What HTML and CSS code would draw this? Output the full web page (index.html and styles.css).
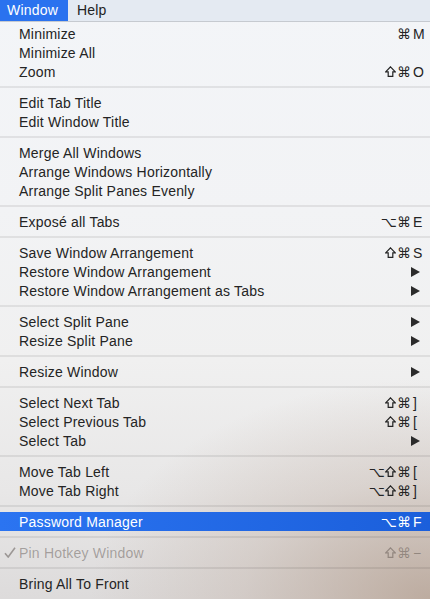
FILE: index.html
```html
<!DOCTYPE html>
<html>
<head>
<meta charset="utf-8">
<link rel="stylesheet" href="styles.css">
</head>
<body>
<div class="screen">
  <div class="menubar">
    <span class="mb-item active">Window</span>
    <span class="mb-item">Help</span>
  </div>
  <div class="menu">
    <div class="item"><span class="label">Minimize</span><span class="sc"><span class="mod">⌘</span><span class="key">M</span></span></div>
    <div class="item"><span class="label">Minimize All</span></div>
    <div class="item"><span class="label">Zoom</span><span class="sc"><span class="mod"><svg class="shift" width="11" height="11" viewBox="0 0 11 11"><path d="M5.5 0.8 L10.3 5.8 L7.8 5.8 L7.8 10.4 L3.2 10.4 L3.2 5.8 L0.7 5.8 Z"/></svg>⌘</span><span class="key">O</span></span></div>
    <div class="sep"></div>
    <div class="item"><span class="label">Edit Tab Title</span></div>
    <div class="item"><span class="label">Edit Window Title</span></div>
    <div class="sep"></div>
    <div class="item"><span class="label">Merge All Windows</span></div>
    <div class="item"><span class="label">Arrange Windows Horizontally</span></div>
    <div class="item"><span class="label">Arrange Split Panes Evenly</span></div>
    <div class="sep"></div>
    <div class="item"><span class="label">Exposé all Tabs</span><span class="sc"><span class="mod">⌥⌘</span><span class="key">E</span></span></div>
    <div class="sep"></div>
    <div class="item"><span class="label">Save Window Arrangement</span><span class="sc"><span class="mod"><svg class="shift" width="11" height="11" viewBox="0 0 11 11"><path d="M5.5 0.8 L10.3 5.8 L7.8 5.8 L7.8 10.4 L3.2 10.4 L3.2 5.8 L0.7 5.8 Z"/></svg>⌘</span><span class="key">S</span></span></div>
    <div class="item"><span class="label">Restore Window Arrangement</span><svg class="arrow" width="9" height="10" viewBox="0 0 9 10"><polygon points="0,0 9,5 0,10"/></svg></div>
    <div class="item"><span class="label">Restore Window Arrangement as Tabs</span><svg class="arrow" width="9" height="10" viewBox="0 0 9 10"><polygon points="0,0 9,5 0,10"/></svg></div>
    <div class="sep"></div>
    <div class="item"><span class="label">Select Split Pane</span><svg class="arrow" width="9" height="10" viewBox="0 0 9 10"><polygon points="0,0 9,5 0,10"/></svg></div>
    <div class="item"><span class="label">Resize Split Pane</span><svg class="arrow" width="9" height="10" viewBox="0 0 9 10"><polygon points="0,0 9,5 0,10"/></svg></div>
    <div class="sep"></div>
    <div class="item"><span class="label">Resize Window</span><svg class="arrow" width="9" height="10" viewBox="0 0 9 10"><polygon points="0,0 9,5 0,10"/></svg></div>
    <div class="sep"></div>
    <div class="item"><span class="label">Select Next Tab</span><span class="sc"><span class="mod"><svg class="shift" width="11" height="11" viewBox="0 0 11 11"><path d="M5.5 0.8 L10.3 5.8 L7.8 5.8 L7.8 10.4 L3.2 10.4 L3.2 5.8 L0.7 5.8 Z"/></svg>⌘</span><span class="key">]</span></span></div>
    <div class="item"><span class="label">Select Previous Tab</span><span class="sc"><span class="mod"><svg class="shift" width="11" height="11" viewBox="0 0 11 11"><path d="M5.5 0.8 L10.3 5.8 L7.8 5.8 L7.8 10.4 L3.2 10.4 L3.2 5.8 L0.7 5.8 Z"/></svg>⌘</span><span class="key">[</span></span></div>
    <div class="item"><span class="label">Select Tab</span><svg class="arrow" width="9" height="10" viewBox="0 0 9 10"><polygon points="0,0 9,5 0,10"/></svg></div>
    <div class="sep"></div>
    <div class="item"><span class="label">Move Tab Left</span><span class="sc"><span class="mod">⌥<svg class="shift" width="11" height="11" viewBox="0 0 11 11"><path d="M5.5 0.8 L10.3 5.8 L7.8 5.8 L7.8 10.4 L3.2 10.4 L3.2 5.8 L0.7 5.8 Z"/></svg>⌘</span><span class="key">[</span></span></div>
    <div class="item"><span class="label">Move Tab Right</span><span class="sc"><span class="mod">⌥<svg class="shift" width="11" height="11" viewBox="0 0 11 11"><path d="M5.5 0.8 L10.3 5.8 L7.8 5.8 L7.8 10.4 L3.2 10.4 L3.2 5.8 L0.7 5.8 Z"/></svg>⌘</span><span class="key">]</span></span></div>
    <div class="sep"></div>
    <div class="item selected"><span class="label">Password Manager</span><span class="sc"><span class="mod">⌥⌘</span><span class="key">F</span></span></div>
    <div class="sep"></div>
    <div class="item disabled"><svg class="check" width="12" height="11" viewBox="0 0 12 11"><path d="M1 6.2 L4.2 10 L11 0.8"/></svg><span class="label">Pin Hotkey Window</span><span class="sc"><span class="mod"><svg class="shift" width="11" height="11" viewBox="0 0 11 11"><path d="M5.5 0.8 L10.3 5.8 L7.8 5.8 L7.8 10.4 L3.2 10.4 L3.2 5.8 L0.7 5.8 Z"/></svg>⌘</span><span class="key">−</span></span></div>
    <div class="sep"></div>
    <div class="item"><span class="label">Bring All To Front</span></div>
  </div>
</div>
</body>
</html>
```

FILE: styles.css
```css
html, body {
  margin: 0;
  padding: 0;
}

body {
  width: 430px;
  height: 599px;
  overflow: hidden;
  font-family: "Liberation Sans", "DejaVu Sans", sans-serif;
}

.screen {
  width: 430px;
  height: 599px;
  overflow: hidden;
  background:
    radial-gradient(ellipse 340px 220px at 100% 100%, rgba(178, 156, 140, 0.75) 0%, rgba(190, 172, 160, 0.35) 55%, rgba(200, 190, 185, 0) 100%),
    linear-gradient(to bottom, #f3f5f8 0%, #f2f3f5 35%, #f0f0f0 60%, #e8e7e7 82%, #dddbdb 100%);
}

.menubar {
  display: flex;
  height: 21px;
  background: #e4eaf2;
  border-bottom: 1px solid #c6cad0;
  font-size: 14px;
  line-height: 21px;
  color: #222;
  letter-spacing: 0.2px;
}

.mb-item {
  padding: 0 10px 0 9px;
}

.mb-item.active {
  width: 51px;
  padding: 0 10px 0 7px;
  background: #2a72ef;
  color: #fff;
}

.menu {
  display: flex;
  flex-direction: column;
  padding-top: 2px;
}

.item {
  display: flex;
  align-items: center;
  height: 19px;
  padding: 0 5px 0 19px;
  font-size: 14px;
  color: #242424;
  position: relative;
}

.label {
  flex: 1;
  white-space: nowrap;
  letter-spacing: 0.2px;
}

.sc {
  display: flex;
  white-space: nowrap;
}

.mod {
  display: flex;
  align-items: center;
  margin-right: 2px;
}

.shift {
  margin-right: 1px;
  fill: none;
  stroke: currentColor;
  stroke-width: 1.2;
  stroke-linejoin: miter;
}

.key {
  width: 12px;
}

.arrow {
  margin-right: 5px;
  fill: #2b2b2b;
}

.sep {
  height: 2px;
  margin: 5px 0;
  background: rgba(0, 0, 0, 0.075);
}

.selected {
  background: linear-gradient(to right, #2b74f1, #1b5fdb);
  color: #fff;
}

.disabled {
  color: rgba(60, 50, 45, 0.38);
}

.check {
  position: absolute;
  left: 4px;
  top: 4px;
  fill: none;
  stroke: rgba(60, 50, 45, 0.42);
  stroke-width: 1.6;
}
```
